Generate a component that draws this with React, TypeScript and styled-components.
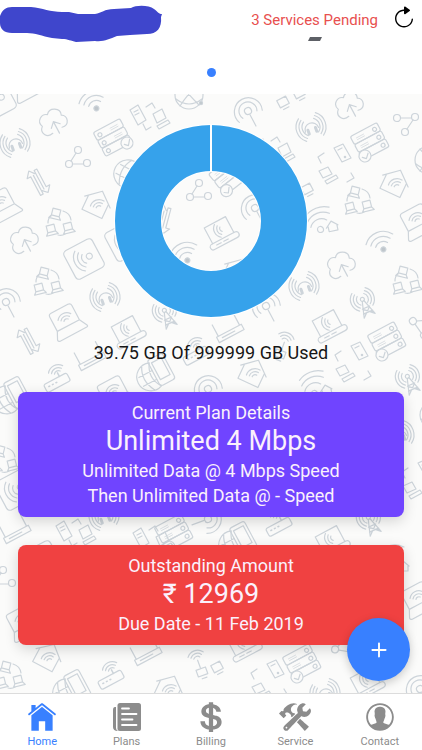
import React from "react";
import styled, { createGlobalStyle } from "styled-components";
import {
  IoIosHome,
  IoLogoUsd,
  IoIosConstruct,
  IoIosContact,
  IoIosRefresh,
  IoIosAdd,
} from "react-icons/io";

const GlobalStyle = createGlobalStyle`
  * { box-sizing: border-box; }
  body {
    margin: 0;
    background: #fff;
    font-family: Roboto, "Liberation Sans", sans-serif;
  }
`;

const Page = styled.div`
  min-height: 100vh;
  display: flex;
  flex-direction: column;
  background: #fff;
`;

const Header = styled.header`
  display: flex;
  justify-content: space-between;
  align-items: flex-start;
  height: 68px;
`;

const Scribble = styled.svg`
  display: block;
  width: 162px;
  height: 44px;
`;

const HeaderActions = styled.div`
  display: flex;
  align-items: flex-start;
  gap: 14px;
  padding: 5px 6px 0 0;
`;

const Pending = styled.div`
  display: flex;
  flex-direction: column;
  align-items: center;
  gap: 7px;
  padding-top: 5px;
`;

const PendingLink = styled.a`
  font-size: 15px;
  line-height: 20px;
  color: #e8504f;
  text-decoration: none;
`;

const Dash = styled.svg`
  display: block;
  width: 14px;
  height: 4px;
`;

const IconButton = styled.button`
  display: block;
  padding: 0;
  border: 0;
  background: none;
  color: #000;
  line-height: 0;
`;

const Pager = styled.div`
  display: flex;
  justify-content: center;
  height: 26px;
`;

const PagerDot = styled.button`
  width: 9px;
  height: 9px;
  padding: 0;
  border: 0;
  border-radius: 50%;
  background: #3880ff;
`;

const Main = styled.main`
  position: relative;
  flex: 1;
  display: flex;
  flex-direction: column;
  align-items: stretch;
  padding: 30px 18px 47px;
  background: #fbfbfa;
`;

const Backdrop = styled.svg`
  position: absolute;
  inset: 0;
  width: 100%;
  height: 100%;
`;

const Donut = styled.svg`
  position: relative;
  display: block;
  align-self: center;
  width: 194px;
  height: 194px;
`;

const Usage = styled.p`
  position: relative;
  margin: 22px 0 26px;
  text-align: center;
  font-size: 18px;
  line-height: 26px;
  color: #161616;
`;

const Card = styled.section<{ $color: string }>`
  position: relative;
  padding: 8px 16px 9px;
  border-radius: 8px;
  background: ${(p) => p.$color};
  color: #fbf0fc;
  text-align: center;
  box-shadow: 0 4px 14px rgba(0, 0, 0, 0.16);
  & + & {
    margin-top: 28px;
  }
`;

const CardLine = styled.p`
  margin: 0;
  font-size: 18px;
  line-height: 25px;
`;

const CardValue = styled.h2`
  margin: 0;
  font-size: 27px;
  font-weight: 400;
  line-height: 33px;
`;

const Fab = styled.button`
  position: absolute;
  right: 12px;
  bottom: 12px;
  width: 63px;
  height: 63px;
  display: flex;
  align-items: center;
  justify-content: center;
  padding: 0;
  border: 0;
  border-radius: 50%;
  background: #3880ff;
  color: #fff;
  box-shadow: 0 3px 10px rgba(0, 0, 0, 0.2);
`;

const TabBar = styled.nav`
  display: grid;
  grid-template-columns: repeat(5, 1fr);
  height: 57px;
  border-top: 1px solid #dcdcdc;
  background: #fff;
`;

const Tab = styled.a<{ $active?: boolean }>`
  display: flex;
  flex-direction: column;
  align-items: center;
  gap: 1px;
  padding-top: 6px;
  color: ${(p) => (p.$active ? "#3880ff" : "#8c8c8c")};
  font-size: 11px;
  line-height: 14px;
  text-decoration: none;
`;

const PaperIcon = ({ size = 34 }: { size?: number }) => (
  <svg width={size} height={size} viewBox="0 0 34 34" aria-hidden="true">
    <path fill="currentColor" d="M6 7V28Q6 30 8 31Q3 31 3 27V10Q3 7 5 7Z" />
    <rect x="7.5" y="3" width="23.5" height="28" rx="2.5" fill="currentColor" />
    <path
      d="M12 8.5H19M12 14H26.5M12 19.5H22.5M12 25H26.5"
      stroke="#fff"
      strokeWidth="1.8"
      strokeLinecap="round"
    />
  </svg>
);

const Arcs = ({ r = [5, 9, 13] }: { r?: number[] }) => (
  <>
    {r.map((n) => (
      <path key={n} d={`M${-n * 0.8} ${-n * 0.6}A${n} ${n} 0 0 1 ${n * 0.8} ${-n * 0.6}`} />
    ))}
  </>
);

const MiniLaptop = () => <path d="M-4-4H4V3H-4ZM-4 3-6 6H6L4 3" />;

const glyphs: Record<string, React.ReactNode> = {
  cloud: (
    <path d="M-5 9C-12 11-17 3-11-2C-14-9-6-14-1-10C4-16 14-10 11-3C17 0 14 10 6 8M1 12V-1M-4 4 1-1 6 4" />
  ),
  wifi: (
    <g transform="translate(3 7)">
      <circle r="2.5" fill="#bfc6cb" />
      <Arcs r={[8, 13, 18]} />
    </g>
  ),
  face: (
    <>
      <path d="M-7 3A7 7 0 1 1 7 3" />
      <path d="M-4 2v4M4 2v4" strokeWidth="3" />
      <g transform="rotate(-90)"><Arcs r={[9, 12, 15]} /></g>
      <g transform="rotate(90)"><Arcs r={[9, 12, 15]} /></g>
    </>
  ),
  server: (
    <>
      <rect x="-15" y="-14" width="30" height="9" rx="2" />
      <rect x="-15" y="-5" width="30" height="9" rx="2" />
      <rect x="-15" y="4" width="30" height="9" rx="2" />
      <circle cx="-10" cy="-9" r="2" />
      <circle cx="-10" cy="0" r="2" />
      <circle cx="-10" cy="9" r="2" />
      <path d="M2-10h8M2-8h8M2-1h8M2 1h8" strokeWidth="0.6" />
      <circle cx="10" cy="11" r="6" fill="#fbfbfa" />
      <path d="m7 11 3 3 4-5" />
    </>
  ),
  serverFlip: (
    <>
      <rect x="-15" y="-14" width="30" height="9" rx="2" />
      <rect x="-15" y="-5" width="30" height="9" rx="2" />
      <rect x="-15" y="4" width="30" height="9" rx="2" />
      <circle cx="10" cy="-9" r="2" />
      <circle cx="10" cy="0" r="2" />
      <circle cx="10" cy="9" r="2" />
      <path d="M-10-10h8M-10-8h8M-10-1h8M-10 1h8" strokeWidth="0.6" />
      <circle cx="-11" cy="10" r="6" fill="#fbfbfa" />
      <path d="m-14 10 3 3 4-4" />
    </>
  ),
  pair: (
    <>
      <path d="M-20-7-12-12-4 3-12 8ZM-16-5-12-7M-15-2-11-4" />
      <path d="M3-3 12-8 16 1 7 6ZM7 9 18 3 20 6 9 12ZM-4-10 2-14 5-9M-7 7-4 13 1 10" />
    </>
  ),
  pairTall: (
    <>
      <path d="M-1-18 8-22 16-8 7-4ZM3-16 7-18M-16 5-7 1-3 8-12 12ZM-10 15 1 9 3 12-8 18ZM-14-3-17-9-11-13M16 7 19 12 12 16" />
      <circle cx="10" cy="-9" r="0.7" />
    </>
  ),
  globe: (
    <>
      <circle r="14" />
      <path d="M-9-11Q0 0 10 10M9-11Q-2 0-9 11M-13 4Q0 14 13 4" />
      <circle cx="12" cy="8" r="1.6" fill="#bfc6cb" />
    </>
  ),
  share: (
    <>
      <circle cx="-9" cy="6" r="3.5" />
      <circle cx="9" cy="5" r="3.5" />
      <circle cx="0" cy="-8" r="3.5" />
      <path d="M-7 3-2-5M-5 6H5" />
    </>
  ),
  shareDown: (
    <>
      <circle cx="-9" cy="-4" r="3.5" />
      <circle cx="9" cy="-5" r="3.5" />
      <circle cx="-1" cy="10" r="3.5" />
      <path d="M-5-4H5M7-2 1 7" />
    </>
  ),
  arrows: <path d="M-4 13V-8H-8L-3-14 1-9M-1 13V-8M-4 13H-1M2-12V9M5-12V8H9L4 14-1 9M2-12H5" />,
  laptop: (
    <>
      <path d="M-13 6V-10Q-13-13-10-13H9Q12-13 12-10V6ZM-13 6-17 14Q-17 16-15 16H15Q17 16 16 14L12 6" />
      <g transform="translate(0 2)"><Arcs r={[3, 6, 9]} /></g>
    </>
  ),
  roll: (
    <>
      <path d="M-12 7V-11H12V7" />
      <rect x="-16" y="7" width="32" height="6" rx="3" />
      <path d="M-9 10h5M-1 10h5" />
      <g transform="translate(4 -2) rotate(-90)"><Arcs r={[3, 6, 9]} /></g>
    </>
  ),
  house: (
    <>
      <path d="M-14-1 0-13 14-1M-11-3V12H11V-3" />
      <g transform="rotate(-45) translate(0 6)"><Arcs r={[3, 6, 9]} /></g>
    </>
  ),
  trio: (
    <>
      <g transform="translate(-4 -9) rotate(14)"><MiniLaptop /></g>
      <g transform="translate(-9 7) rotate(-14)"><MiniLaptop /></g>
      <g transform="translate(8 5) rotate(-14)"><MiniLaptop /></g>
      <path d="M3-11Q10-9 11-2M-9-6Q-12-4-12 1M-2 13Q2 14 5 12" />
    </>
  ),
  tile: (
    <>
      <rect x="-16" y="-16" width="32" height="32" rx="4" />
      <circle cx="6" cy="0" r="3" />
      <g transform="translate(4 0) rotate(-90)"><Arcs r={[6, 10, 14]} /></g>
    </>
  ),
  radar: (
    <>
      <circle r="3.5" />
      <path d="M0 4V17M-8 4A9 9 0 1 1 8 4M-13 6A14 14 0 1 1 13 6" />
    </>
  ),
  tower: (
    <>
      <circle cy="-4" r="2" />
      <path d="M-1-2-6 14M1-2 6 14M-3 5H3M-5 10H5M-6 14 4 5M6 14-4 5" />
      <g transform="translate(0 -4) rotate(-90)"><Arcs r={[6, 9, 12]} /></g>
      <g transform="translate(0 -4) rotate(90)"><Arcs r={[6, 9, 12]} /></g>
    </>
  ),
  router: <path d="M-14 2H14V8H-14ZM-12 2V-11M12 2V-11M-9 5H5" />,
  modem: (
    <>
      <rect x="-13" y="2" width="26" height="9" rx="2" />
      <path d="M-9 6h1M-5 6h1M-1 6h1M5 2V-2" strokeWidth="1.5" />
      <g transform="translate(5 0)"><Arcs r={[4, 7, 10]} /></g>
    </>
  ),
  phoneGlobe: (
    <>
      <path d="M1 14A14 14 0 1 1 1-12M1-12Q-8 1 1 14M-15-4H0M-15 6H0M-7-13Q-15 0-7 14" />
      <rect x="0" y="-15" width="17" height="29" rx="3" />
      <path d="M3-11H14V8H3Z" />
    </>
  ),
  wifiHome: (
    <>
      <circle cx="-3" cy="7" r="3" />
      <path d="M-12 3A11 11 0 0 1 5-1M-14-3A17 17 0 0 1 9-7M-15-9A23 23 0 0 1 10-13M3 7 9 1 15 6M5 6V11H14V6" />
    </>
  ),
  monitor: <path d="M-5-4H5V4H-5ZM-3 7H3" />,
  camera: (
    <>
      <path d="M-5 5H5V12H-5ZM-2 15H3M0 4V-4" />
      <g transform="translate(0 -4)"><Arcs r={[4, 7, 10]} /></g>
    </>
  ),
};

type Mark = [string, number, number, number?];

const marks: Mark[] = [
  ["tile", -4, 100, -28], ["laptop", 26, 82, -28], ["wifi", 91, 103, -22], ["cloud", 53, 123, -28],
  ["face", 15, 143, -20], ["server", 113, 138, -28], ["pair", 150, 117], ["globe", 189, 95],
  ["share", 78, 158], ["arrows", 38, 182, -28], ["laptop", 1, 204, -28], ["house", 97, 203, 25],
  ["trio", 60, 222], ["phoneGlobe", 132, 175, 28], ["cloud", 24, 241, -28], ["tile", 84, 259, -28],
  ["trio", 48, 281], ["radar", 6, 302, -28], ["face", 105, 297, -20], ["laptop", 66, 320, -28],
  ["tower", 166, 314, -24], ["roll", 127, 331, -28], ["arrows", 28, 341, -28], ["router", 90, 357, -28],
  ["modem", 54, 377, -28], ["phoneGlobe", 154, 374, -28], ["modem", 193, 350, -28],
  ["laptop", 114, 392, -28], ["phoneGlobe", 10, 397, -28], ["radar", 208, 389, -28],
  ["tile", 125, 241, -28],
  ["radar", 248, 111, -28], ["monitor", 283, 102, -28], ["monitor", 299, 93, -28],
  ["face", 311, 127, -20], ["cloud", 349, 106, -28], ["shareDown", 406, 122],
  ["serverFlip", 370, 142, -28], ["pairTall", 335, 166], ["house", 395, 182, 25],
  ["globe", 429, 160], ["pair", 275, 151], ["trio", 359, 200],
  ["wifiHome", 322, 222, -12], ["laptop", 417, 220, -28], ["wifi", 378, 244, -22],
  ["monitor", 307, 189, -28], ["cloud", 341, 266, -28], ["trio", 407, 280],
  ["face", 304, 286, -20], ["tower", 364, 303, -24], ["share", 423, 325, 55],
  ["roll", 328, 325, -28], ["serverFlip", 387, 341, -28], ["pairTall", 352, 364],
  ["tower", 409, 380, -24], ["radar", 266, 306, -28], ["router", 228, 329, -28],
  ["camera", 283, 346, 20], ["house", 253, 372, 25], ["wifiHome", 316, 386, -12],
  ["share", 199, 191], ["serverFlip", 229, 176, -38], ["roll", 220, 232, -28],
  ["wifi", 182, 255, -22], ["radar", 255, 208, -28], ["arrows", 163, 219, 15], ["house", 237, 271, 25],
  ["trio", 4, 459], ["tile", 15, 490, -28], ["router", 15, 530, -28], ["pair", 76, 533],
  ["face", 104, 516, -20], ["serverFlip", 174, 533, -28], ["tile", 42, 561, -28],
  ["pair", 153, 540], ["radar", 208, 519, 70], ["phoneGlobe", 236, 542, -28],
  ["modem", 276, 521, -28], ["roll", 331, 541, -28], ["tower", 370, 521, -24],
  ["wifiHome", 394, 560], ["share", 3, 578], ["laptop", 23, 621, -28],
  ["house", 48, 656, 28], ["trio", 10, 675], ["modem", 108, 674, -28],
  ["phoneGlobe", 70, 690, -28], ["router", 146, 652, -28], ["house", 169, 688, 25],
  ["camera", 199, 664, -20], ["roll", 243, 644, -28], ["monitor", 217, 667, -28],
  ["serverFlip", 302, 663, -28], ["pairTall", 268, 682], ["share", 345, 645, 10],
  ["face", 325, 693, -20], ["roll", 366, 682, -28], ["radar", 420, 689, -28],
  ["laptop", 418, 598, -28], ["face", 399, 435, -20], ["pairTall", 419, 481],
  ["globe", 434, 415],
];

const Doodles = () => (
  <Backdrop viewBox="0 94 422 599" preserveAspectRatio="xMidYMin slice" aria-hidden="true">
    <g fill="none" stroke="#cdd4da" strokeWidth="1.2" strokeLinecap="round" strokeLinejoin="round">
      {marks.map(([name, x, y, angle = 0], i) => (
        <g key={i} transform={`translate(${x} ${y}) rotate(${angle})`}>
          {glyphs[name]}
        </g>
      ))}
    </g>
  </Backdrop>
);

const tabs = [
  { label: "Home", Icon: IoIosHome },
  { label: "Plans", Icon: PaperIcon },
  { label: "Billing", Icon: IoLogoUsd },
  { label: "Service", Icon: IoIosConstruct },
  { label: "Contact", Icon: IoIosContact },
];

export default function App() {
  return (
    <Page>
      <GlobalStyle />
      <Header>
        <Scribble viewBox="0 0 162 44" aria-hidden="true">
          <path
            fill="#3f46cc"
            d="M0 16C2 10 6 7 12 7H31C43 8 50 12 62 12H69L78 14H95C102 13 104 9 114 9L131 8C136 5 149 5 154 9C158 12 159 14 162 14L161 17C162 28 157 34 147 34L130 35L117 36C109 39 104 42 95 41L76 42C71 41 68 39 62 39L52 38C42 36 35 33 27 33H12C4 33 0 29 0 23Z"
          />
        </Scribble>
        <HeaderActions>
          <Pending>
            <PendingLink href="#services">3 Services Pending</PendingLink>
            <Dash viewBox="0 0 14 4" aria-hidden="true">
              <path d="M2 0H14L12 4H0Z" fill="#5d6066" />
            </Dash>
          </Pending>
          <IconButton type="button" aria-label="Refresh">
            <IoIosRefresh size={24} />
          </IconButton>
        </HeaderActions>
      </Header>
      <Pager>
        <PagerDot type="button" aria-label="Slide 1" />
      </Pager>
      <Main>
        <Doodles />
        <Donut viewBox="0 0 194 194" role="img" aria-label="Data usage">
          <circle cx="97" cy="97" r="73" fill="none" stroke="#fff" strokeWidth="48" />
          <circle cx="97" cy="97" r="73" fill="none" stroke="#36a2eb" strokeWidth="46" />
          <path d="M97 0V48" stroke="#fff" strokeWidth="2" />
        </Donut>
        <Usage>39.75 GB Of 999999 GB Used</Usage>
        <Card $color="#7044ff">
          <CardLine>Current Plan Details</CardLine>
          <CardValue>Unlimited 4 Mbps</CardValue>
          <CardLine>Unlimited Data @ 4 Mbps Speed</CardLine>
          <CardLine>Then Unlimited Data @ - Speed</CardLine>
        </Card>
        <Card $color="#f04141">
          <CardLine>Outstanding Amount</CardLine>
          <CardValue>₹ 12969</CardValue>
          <CardLine>Due Date - 11 Feb 2019</CardLine>
        </Card>
        <Fab type="button" aria-label="Add">
          <IoIosAdd size={30} />
        </Fab>
      </Main>
      <TabBar>
        {tabs.map(({ label, Icon }, i) => (
          <Tab key={label} href={`#${label.toLowerCase()}`} $active={i === 0}>
            <Icon size={34} />
            {label}
          </Tab>
        ))}
      </TabBar>
    </Page>
  );
}
